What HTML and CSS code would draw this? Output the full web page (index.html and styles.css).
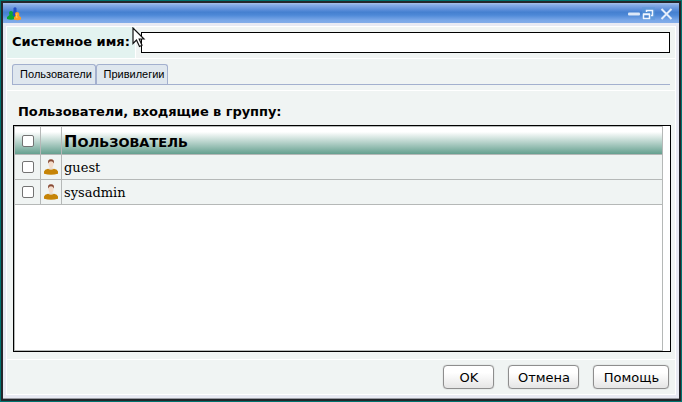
FILE: index.html
```html
<!DOCTYPE html>
<html lang="ru">
<head>
<meta charset="utf-8">
<title>Группа</title>
<link rel="stylesheet" href="styles.css">
</head>
<body>
<div class="window">
  <header class="titlebar">
    <svg class="app-icon" width="15" height="14" viewBox="0 0 15 14">
      <path d="M5 10V5.500L6.500 4.500V1Q8 -.5 9.500 1V4.500L11 6V10Z" fill="#2450c4"/>
      <path d="M0 12V10L2.500 8L2 6Q2 4 4 4T6 6L5.500 8L8 10V12Q4 13.500 0 12Z" fill="#0ca535"/>
      <path d="M7 12.500V10.500L8.500 8.500L8 7Q8 5 10 5T12.500 7L12 8.500L14 10.500V12.500Q10.500 13.800 7 12.500Z" fill="#ff9d20"/>
      <path d="M10 6.500L9.500 8.500L10 11" fill="none" stroke="#ffd46b"/>
    </svg>
    <svg class="controls" width="48" height="14" viewBox="0 0 48 14">
      <rect x="1" y="5.500" width="12" height="3" rx="1" fill="#dce8f8"/>
      <rect x="15" y="0" width="13" height="13" fill="#5a9ad8" opacity=".5"/>
      <path d="M19.500 5V3.500H25.500V8.500H24M19 3.500H26" fill="none" stroke="#f0f6ff" stroke-width="1.500"/>
      <path d="M16.500 7.500H22.500V11.500H16.500ZM16 7H23" fill="#4b86d0" stroke="#f0f6ff" stroke-width="1.500"/>
      <path d="M34.500 2L44.500 12M44.500 2L34.500 12" stroke="#e6eefb" stroke-width="2"/>
    </svg>
  </header>
  <main class="panel">
    <div class="name-row">
      <label class="name-label" for="sysname">Системное имя:</label>
      <div class="name-field"><input id="sysname" class="name-input" type="text"></div>
    </div>
    <nav class="tabs">
      <div class="tab-strip">
        <span class="tab tab-users">Пользователи</span>
        <span class="tab tab-rights">Привилегии</span>
      </div>
    </nav>
    <section class="content">
      <h2 class="caption">Пользователи, входящие в группу:</h2>
      <div class="list">
        <div class="grid">
          <div class="row head"><span class="cell check"><i class="box"></i></span><span class="cell"></span><span class="cell text">Пользователь</span></div>
          <div class="row"><span class="cell check"><i class="box"></i></span><span class="cell pic"><svg width="16" height="16" viewBox="0 0 16 16"><path d="M6.500 7H9.500V9L11 10L8 12.500L5 10L6.500 9Z" fill="#e9dccf"/><ellipse cx="8" cy="4.500" rx="2.600" ry="4" fill="#f3dccb"/><path d="M5.200 4.500Q4.300 .2 8 .2T10.800 4.500Q10 2.300 8 2.300T5.200 4.500Z" fill="#874a35"/><path d="M1 14.800V12.500Q1.500 10.500 5 9.700Q8 12 11 9.700Q14.500 10.500 15 12.500V14.800Q8 16.700 1 14.800Z" fill="#c68407"/></svg></span><span class="cell text">guest</span></div>
          <div class="row"><span class="cell check"><i class="box"></i></span><span class="cell pic"><svg width="16" height="16" viewBox="0 0 16 16"><path d="M6.500 7H9.500V9L11 10L8 12.500L5 10L6.500 9Z" fill="#e9dccf"/><ellipse cx="8" cy="4.500" rx="2.600" ry="4" fill="#f3dccb"/><path d="M5.200 4.500Q4.300 .2 8 .2T10.800 4.500Q10 2.300 8 2.300T5.200 4.500Z" fill="#874a35"/><path d="M1 14.800V12.500Q1.500 10.500 5 9.700Q8 12 11 9.700Q14.500 10.500 15 12.500V14.800Q8 16.700 1 14.800Z" fill="#c68407"/></svg></span><span class="cell text">sysadmin</span></div>
        </div>
      </div>
    </section>
    <footer class="actions">
      <button class="btn ok">OK</button>
      <button class="btn cancel">Отмена</button>
      <button class="btn help">Помощь</button>
    </footer>
  </main>
</div>
<svg class="cursor" width="14" height="21" viewBox="0 0 14 21">
  <path d="M1 1V16.500L4.500 13L7.500 19.500L10 18.300L7.200 12H12Z" fill="#fff" stroke="#111" stroke-width="1.200"/>
</svg>
</body>
</html>
```
FILE: styles.css
```css
* { box-sizing: border-box; }
body {
  margin: 0;
  width: 682px;
  height: 402px;
  padding: 1px;
  background: #007370;
  font-family: "DejaVu Sans", sans-serif;
  font-size: 13px;
  color: #000;
  overflow: hidden;
}
.window {
  height: 400px;
  border: 2px solid #25262b;
  background: #e8eaf3;
  box-shadow: inset 0 -1px #9b9ca3;
}
.titlebar {
  display: flex;
  justify-content: space-between;
  height: 20px;
  padding: 4px 4px 0 4px;
  background: linear-gradient(#a5c1ec 0, #82a8e4 12%, #6292dc 30%, #4580d0 46%, #4d88d7 60%, #78a6e7 85%, #83ade9 100%);
}
.panel {
  display: flex;
  flex-direction: column;
  width: 670px;
  height: 369px;
  margin: 3px 0 0 3px;
  border: 1px solid #fff;
  background: #f0f4f3;
}
.name-row {
  display: flex;
  height: 32px;
  border-bottom: 1px solid #fff;
}
.name-label {
  width: 129px;
  padding-left: 5px;
  border-right: 1px solid #fff;
  background: #e3f3f0;
  font-weight: bold;
  line-height: 30px;
  white-space: nowrap;
}
.name-field { flex: 1; padding: 5px 5px 0; }
.name-input {
  display: block;
  width: 100%;
  height: 21px;
  border: 1px solid #000;
  border-radius: 0;
  background: #fff;
  outline: 0;
}
.tabs {
  height: 32px;
  padding: 5px 5px 0;
  border-bottom: 1px solid #fff;
}
.tab-strip {
  display: flex;
  height: 21px;
  border-bottom: 1px solid #a3b0ce;
}
.tab {
  height: 20px;
  border: 1px solid #a3b0ce;
  border-bottom: 0;
  border-radius: 3px 3px 0 0;
  background: #dfe7ee;
  font: 11px/19px "Liberation Sans", sans-serif;
  text-align: center;
  white-space: nowrap;
}
.tab-users { width: 84px; padding-left: 4px; }
.tab-rights { width: 72px; padding-left: 4px; }
.content { height: 269px; padding: 0 4px 0 6px; border-bottom: 1px solid #fff; }
.caption {
  height: 34px;
  margin: 0;
  padding-left: 5px;
  font-size: 13px;
  line-height: 41px;
  letter-spacing: -.07px;
}
.list {
  width: 658px;
  height: 227px;
  border: 1px solid #000;
  background: #fff;
}
.grid {
  width: 649px;
  height: 225px;
  border: 1px solid #b5b8b7;
}
.row {
  display: grid;
  grid-template: 100% / 26px 21px 1fr;
  height: 25px;
  border-bottom: 1px solid #b5b8b7;
  background: #f0f4f3;
}
.head {
  height: 28px;
  background: linear-gradient(#fff 18%, #65a08f);
}
.cell { border-right: 1px solid #b5b8b7; }
.cell:last-child { border-right: 0; }
.check, .pic { display: flex; align-items: center; justify-content: center; }
.box {
  width: 12px;
  height: 12px;
  border: 1px solid #737373;
  border-radius: 2px;
  background: #fff;
}
.text {
  padding-left: 2px;
  font: 13px/25px "DejaVu Serif", serif;
}
.head .text {
  font: bold 13px/31px "DejaVu Sans", sans-serif;
  text-transform: uppercase;
}
.head .text::first-letter { font-size: 16px; line-height: 1; }
.actions {
  display: flex;
  justify-content: flex-end;
  gap: 14px;
  padding: 5px 6px 0;
}
.btn {
  height: 24px;
  padding: 1px 0 0 1px;
  border: 1px solid #8e8e8e;
  border-radius: 4px;
  background: linear-gradient(#fff 30%, #e5e5e5);
  box-shadow: 0 0 1px #999;
  font: 13px "DejaVu Sans", sans-serif;
  color: #000;
}
.ok { width: 51px; }
.cancel { width: 71px; }
.help { width: 76px; }
.cursor { position: absolute; left: 132px; top: 27px; }
```
